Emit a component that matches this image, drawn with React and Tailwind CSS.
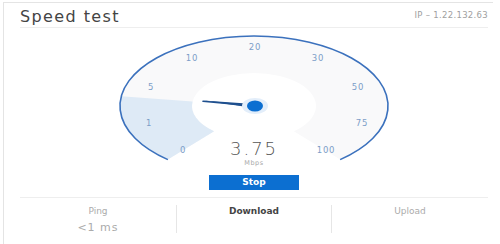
export default function App() {
  const labels = [
    ["0", 79, 122],
    ["1", 45, 95],
    ["5", 47, 59],
    ["10", 88, 30],
    ["20", 151, 19],
    ["30", 214, 30],
    ["50", 254, 59],
    ["75", 258, 95],
    ["100", 222, 122],
  ];

  return (
    <div className="w-[500px] h-[244px] bg-white pt-[2px] pl-[3px] overflow-hidden font-['DejaVu_Sans',sans-serif]">
      <div className="w-[490px] h-[242px] border-t border-l border-[#e4e4e4] pl-[16px] pr-[5px]">

        {/* header */}
        <div className="h-[25px] flex items-center justify-between border-b border-[#eeeeee]">
          <h1 className="text-[16px] leading-none tracking-[1.4px] text-[#444444] pt-[3px]">
            Speed test
          </h1>
          <span className="text-[8.5px] text-[#a0a0a0] tracking-[0.3px]">
            IP – 1.22.132.63
          </span>
        </div>

        {/* gauge */}
        <div className="relative w-[300px] h-[146px] mx-auto">
          <svg width="300" height="146" viewBox="0 0 300 146" className="block">
            <path
              d="M63.87 131.62 A134 70 0 1 1 236.13 131.62 L189.85 103.28 A62 33 0 1 0 110.15 103.28 Z"
              fill="#f9f9fa"
            />
            <path
              d="M63.87 131.62 A134 70 0 0 1 17.3 68.26 L88.6 73.41 A62 33 0 0 0 110.15 103.28 Z"
              fill="#deeaf6"
            />
            <path
              d="M63.87 131.62 A134 70 0 1 1 236.13 131.62"
              fill="none"
              stroke="#3b71bd"
              strokeWidth="1.6"
            />
            {labels.map(([t, x, y]) => (
              <text
                key={t}
                x={x}
                y={y}
                textAnchor="middle"
                dominantBaseline="central"
                fontSize="8.5"
                letterSpacing="0.8"
                fill="#7d9ec8"
                fontFamily="DejaVu Sans, sans-serif"
              >
                {t}
              </text>
            ))}
            <path d="M99 72.6 L150 76 L150 80 Z" fill="#1e4f8e" />
            <line x1="99" y1="73.3" x2="150" y2="78" stroke="#1e4f8e" strokeWidth="1.6" strokeLinecap="round" />
            <ellipse cx="151" cy="78" rx="13" ry="8" fill="#e3eefa" />
            <ellipse cx="151" cy="78" rx="8" ry="5.5" fill="#0c6fd1" />
          </svg>

          <div className="absolute left-0 right-0 top-[111px] flex flex-col items-center">
            <span className="text-[18px] leading-[19px] font-light tracking-[2px] text-[#555555]">
              3.75
            </span>
            <span className="text-[6.5px] leading-[8px] tracking-[0.6px] text-[#a8a8a8] mt-[1px]">
              Mbps
            </span>
          </div>
        </div>

        {/* stop button */}
        <div className="flex justify-center mt-[1px]">
          <button className="w-[90px] h-[15px] bg-[#0c6fd1] text-white text-[9px] font-bold leading-none">
            Stop
          </button>
        </div>

        {/* results */}
        <div className="mt-[7px] border-t border-[#eeeeee]">
          <div className="grid grid-cols-3 mt-[7px]">
            <div className="h-[28px] flex flex-col items-center">
              <span className="text-[9px] leading-[12px] text-[#ababab]">Ping</span>
              <span className="text-[11px] leading-[16px] tracking-[1px] text-[#ababab] mt-[3px]">&lt;1 ms</span>
            </div>
            <div className="h-[28px] flex flex-col items-center border-l border-r border-[#e6e6e6]">
              <span className="text-[9px] leading-[12px] font-bold text-[#444444]">Download</span>
            </div>
            <div className="h-[28px] flex flex-col items-center">
              <span className="text-[9px] leading-[12px] text-[#ababab]">Upload</span>
            </div>
          </div>
        </div>
      </div>
    </div>
  );
}
